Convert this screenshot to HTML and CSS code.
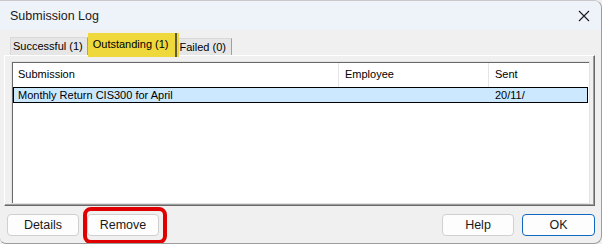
FILE: index.html
```html
<!DOCTYPE html>
<html>
<head>
<meta charset="utf-8">
<link rel="stylesheet" href="styles.css">
</head>
<body>
<div class="window">
  <div class="titlebar">
    <span class="title">Submission Log</span>
    <svg class="close" width="12" height="12" viewBox="0 0 12 12"><path d="M1 1L11 11M11 1L1 11" stroke="#1a1a1a" stroke-width="1.1" fill="none"/></svg>
  </div>
  <div class="content">
    <div class="tabs">
      <div class="tab first">Successful (1)</div>
      <div class="tab active">Outstanding (1)</div>
      <div class="tab last">Failed (0)</div>
    </div>
    <div class="panel">
      <div class="list">
        <div class="header">
          <div class="col c1">Submission</div>
          <div class="col c2">Employee</div>
          <div class="col c3">Sent</div>
        </div>
        <div class="row selected">
          <div class="col c1">Monthly Return CIS300 for April</div>
          <div class="col c2"></div>
          <div class="col c3">20/11/</div>
        </div>
      </div>
    </div>
    <div class="buttons">
      <div class="group">
        <button class="btn">Details</button>
        <button class="btn marked">Remove<span class="mark"></span></button>
      </div>
      <div class="group">
        <button class="btn">Help</button>
        <button class="btn primary">OK</button>
      </div>
    </div>
  </div>
</div>
</body>
</html>
```
FILE: styles.css
```css
html, body {
  margin: 0;
  padding: 0;
  background: #f0f0f0;
}
.window {
  width: 602px;
  height: 244px;
  box-sizing: border-box;
  border-right: 1px solid #9c9c9c;
  border-bottom: 1px solid #9c9c9c;
  border-top: 1px solid #c8c8c8;
  border-radius: 0 8px 8px 6px;
  display: flex;
  flex-direction: column;
  overflow: hidden;
  background: #f0f0f0;
  font-family: "Liberation Sans", Arial, sans-serif;
  color: #000;
}
.titlebar {
  height: 29px;
  flex: none;
  background: #eef2f9;
  display: flex;
  align-items: center;
  justify-content: space-between;
  padding: 0 11px 0 10px;
}
.title {
  font-size: 12.5px;
  color: #1a1a1a;
}
.close {
  display: block;
}
.content {
  flex: 1;
  display: flex;
  flex-direction: column;
  padding: 0 6px 0 4px;
}
.tabs {
  display: flex;
  align-items: flex-end;
  height: 25px;
  padding-left: 6px;
  position: relative;
  z-index: 1;
}
.tab {
  font-size: 11px;
  height: 17px;
  line-height: 17px;
  background: #e6e6e6;
  border: 1px solid #d9d9d9;
  border-bottom: none;
  border-right: 1px solid #a0a0a0;
}
.tab.first {
  padding: 0 4px 0 2px;
}
.tab.last {
  height: 16px;
  line-height: 16px;
  padding: 0 5px 0 1px;
  border-left: none;
}
.tab.active {
  background: #efd83b;
  height: 24px;
  line-height: 22px;
  padding: 0 10px 0 5px;
  border: none;
  box-shadow: inset -2px 0 0 #efd83b, inset -4px 0 0 #5e5a3a;
  margin-bottom: -2px;
}
.panel {
  height: 151px;
  box-sizing: border-box;
  border-top: 1px solid #ffffff;
  border-left: 1px solid #ffffff;
  border-right: 1px solid #696969;
  border-bottom: 1px solid #696969;
  box-shadow: inset -1px -1px 0 #a0a0a0;
  padding: 5px 4px 0 6px;
}
.list {
  height: 143px;
  box-sizing: border-box;
  background: #fff;
  border-top: 1px solid #a0a0a0;
  border-left: 1px solid #a0a0a0;
  border-right: 1px solid #fff;
  border-bottom: 1px solid #fff;
  box-shadow: inset 1px 1px 0 #696969;
  outline: 1px solid #e3e3e3;
  outline-offset: -1px;
  padding: 1px 1px 0 1px;
  font-size: 11px;
}
.header, .row {
  display: flex;
}
.header {
  height: 24px;
  align-items: center;
}
.header .col {
  height: 24px;
  line-height: 23px;
  border-right: 1px solid #e5e5e5;
}
.col {
  box-sizing: border-box;
  padding-left: 5px;
  white-space: nowrap;
}
.c1 { width: 326px; }
.c2 { width: 150px; padding-left: 6px; }
.c3 { flex: 1; padding-left: 6px; }
.header .c3 { border-right: none; }
.row {
  height: 16px;
  line-height: 14px;
  box-sizing: border-box;
  background: #cce8ff;
  border: 1px solid #000;
}
.row .c1 { width: 325px; padding-left: 4px; }
.buttons {
  display: flex;
  justify-content: space-between;
  padding: 8px 0 0 3px;
}
.group {
  display: flex;
  gap: 8px;
}
.btn {
  position: relative;
  width: 72px;
  height: 22px;
  box-sizing: border-box;
  background: #fdfdfd;
  border: 1px solid #d0d0d0;
  border-radius: 4px;
  font-family: "Liberation Sans", Arial, sans-serif;
  font-size: 12.5px;
  color: #1a1a1a;
  padding: 0;
}
.btn.primary {
  width: 73px;
  border-color: #1168c0;
}
.mark {
  position: absolute;
  left: -5px;
  top: -8px;
  width: 84px;
  height: 37px;
  box-sizing: border-box;
  border: 4px solid #e00000;
  border-radius: 8px;
}
```
